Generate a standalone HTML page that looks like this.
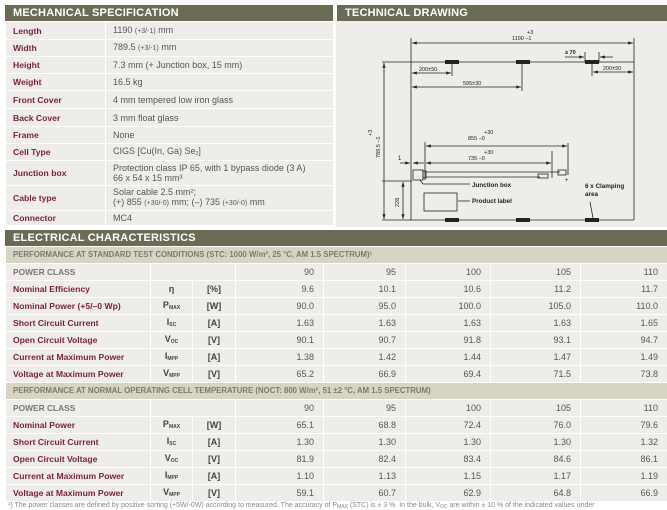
<!DOCTYPE html>
<html><head><meta charset="utf-8"><style>
*{margin:0;padding:0;box-sizing:border-box}
body{width:667px;height:509px;background:#fff;font-family:"Liberation Sans",sans-serif;position:relative;overflow:hidden}
.hd{position:absolute;background:#6b6a55;color:#fff;font-weight:bold;font-size:11px;letter-spacing:0.2px;line-height:16px;padding-left:8px;transform-origin:left}
table{position:absolute;border-collapse:collapse;table-layout:fixed}
td{background:#efede9;border:1px solid #fff;font-size:9px;color:#555;padding:0 7px;white-space:nowrap;line-height:10px;overflow:hidden}
td.l{color:#7a1f3d;font-weight:bold;font-size:8.6px}
td.r{text-align:right;padding-right:9px}
td.c{text-align:center;font-weight:bold;color:#444}
tr.sub td{background:#d7d4c3;color:#7d7a68;font-weight:bold;font-size:7.8px}
tr.pc td{color:#777;font-weight:bold;font-size:8.4px}
tr.pc td.r{font-weight:normal;color:#555;font-size:9px}
sub{font-size:5px;vertical-align:-1px}
small{font-size:7px}
svg text{font-family:"Liberation Sans",sans-serif;fill:#222}
</style></head><body>
<div class="hd" style="left:5px;top:5px;width:328px;height:16px">MECHANICAL SPECIFICATION</div>
<div class="hd" style="left:337px;top:5px;width:330px;height:16px">TECHNICAL DRAWING</div>
<table style="left:5px;top:21px;width:329px">
<col style="width:100px"><col>
<tr style="height:18px"><td class="l">Length</td><td>1190 <small>(+3/-1)</small> mm</td></tr>
<tr style="height:17px"><td class="l">Width</td><td>789.5 <small>(+3/-1)</small> mm</td></tr>
<tr style="height:17px"><td class="l">Height</td><td>7.3 mm (+ Junction box, 15 mm)</td></tr>
<tr style="height:17px"><td class="l">Weight</td><td>16.5 kg</td></tr>
<tr style="height:18px"><td class="l">Front Cover</td><td>4 mm tempered low iron glass</td></tr>
<tr style="height:18px"><td class="l">Back Cover</td><td>3 mm float glass</td></tr>
<tr style="height:17px"><td class="l">Frame</td><td>None</td></tr>
<tr style="height:17px"><td class="l">Cell Type</td><td>CIGS [Cu(In, Ga) Se<sub>2</sub>]</td></tr>
<tr style="height:25px"><td class="l">Junction box</td><td>Protection class IP 65, with 1 bypass diode (3 A)<br>66 x 54 x 15 mm³</td></tr>
<tr style="height:25px"><td class="l">Cable type</td><td>Solar cable 2.5 mm²;<br>(+) 855 <small>(+30/-0)</small> mm; (–) 735 <small>(+30/-0)</small> mm</td></tr>
<tr style="height:15px"><td class="l">Connector</td><td>MC4</td></tr>
</table>
<div style="position:absolute;left:336px;top:21px;width:331px;height:206px;background:#efede9"></div>
<svg style="position:absolute;left:0;top:0" width="667" height="230" viewBox="0 0 667 230" stroke="#222" stroke-width="0.8" fill="none">
<defs><marker id="a" markerWidth="6" markerHeight="4" refX="6" refY="2" orient="auto-start-reverse"><path d="M0,0L6,2L0,4z" fill="#222" stroke="none"/></marker></defs>
<line x1="382" y1="62" x2="634" y2="62"/><line x1="382" y1="220" x2="634" y2="220"/>
<line x1="411" y1="38" x2="411" y2="220"/><line x1="634" y1="38" x2="634" y2="220"/>
<line x1="412" y1="43" x2="633" y2="43" marker-start="url(#a)" marker-end="url(#a)"/>
<g fill="#222" stroke="none">
<rect x="445" y="60" width="14" height="4"/><rect x="516" y="60" width="14" height="4"/><rect x="585" y="60" width="14" height="4"/>
<rect x="445" y="218" width="14" height="4"/><rect x="516" y="218" width="14" height="4"/><rect x="585" y="218" width="14" height="4"/>
</g>
<line x1="452" y1="64" x2="452" y2="76"/><line x1="412" y1="73" x2="451" y2="73" marker-start="url(#a)" marker-end="url(#a)"/>
<line x1="522" y1="64" x2="522" y2="91"/><line x1="412" y1="87" x2="521" y2="87" marker-start="url(#a)" marker-end="url(#a)"/>
<line x1="592" y1="64" x2="592" y2="76"/><line x1="593" y1="72" x2="633" y2="72" marker-start="url(#a)" marker-end="url(#a)"/>
<line x1="585" y1="52" x2="585" y2="62"/><line x1="599" y1="52" x2="599" y2="62"/>
<line x1="565" y1="57" x2="584" y2="57" marker-end="url(#a)"/><line x1="613" y1="57" x2="600" y2="57" marker-end="url(#a)"/>
<line x1="384" y1="63" x2="384" y2="219" marker-start="url(#a)" marker-end="url(#a)"/>
<line x1="425" y1="142" x2="425" y2="180"/><line x1="568" y1="143" x2="568" y2="175"/><line x1="552" y1="151" x2="552" y2="178"/>
<line x1="426" y1="146" x2="567" y2="146" marker-start="url(#a)" marker-end="url(#a)"/>
<line x1="426" y1="163" x2="551" y2="163" marker-start="url(#a)" marker-end="url(#a)"/>
<line x1="400" y1="163" x2="410" y2="163" marker-end="url(#a)"/><line x1="424" y1="163" x2="413" y2="163" marker-end="url(#a)"/>
<rect x="413" y="170" width="10" height="10"/><rect x="423" y="171" width="3" height="7"/>
<line x1="426" y1="172" x2="560" y2="172"/><line x1="426" y1="177" x2="540" y2="177"/>
<rect x="538" y="174" width="10" height="4"/><rect x="558" y="170" width="8" height="5"/>
<line x1="420" y1="180" x2="423" y2="184"/><line x1="423" y1="184" x2="470" y2="184"/>
<line x1="382" y1="181" x2="412" y2="181"/><line x1="403" y1="182" x2="403" y2="219" marker-start="url(#a)" marker-end="url(#a)"/>
<rect x="424" y="193" width="33" height="18"/><line x1="458" y1="201" x2="470" y2="201"/>
<line x1="590" y1="202" x2="593" y2="218"/>
<g stroke="none" font-size="5.5">
<text x="512" y="40">1190 –1</text><text x="527" y="34">+3</text>
<text x="419" y="71">200±50</text><text x="463" y="85">595±30</text><text x="603" y="70">200±50</text>
<text x="565" y="54" font-weight="bold">≥ 70</text>
<text x="468" y="140">855  –0</text><text x="484" y="134">+30</text>
<text x="468" y="160">735  –0</text><text x="484" y="154">+30</text>
<text x="398" y="160" font-size="6">1</text><text x="565" y="182" font-size="6">+</text>
<text transform="translate(380,158) rotate(-90)">789.5 –1</text>
<text transform="translate(372,136) rotate(-90)">+3</text>
<text transform="translate(399,207) rotate(-90)">228</text>
<g font-size="6.3" font-weight="bold"><text x="472" y="187">Junction box</text><text x="472" y="203">Product label</text>
<text x="585" y="188">6 x Clamping</text><text x="585" y="196">area</text></g>
</g>
</svg>
<div class="hd" style="left:5px;top:230px;width:662px;height:16px">ELECTRICAL CHARACTERISTICS</div>
<table style="left:5px;top:246px;width:663px">
<col style="width:145px"><col style="width:42px"><col style="width:43px"><col style="width:88px"><col style="width:82px"><col style="width:85px"><col style="width:90px"><col>
<tr class="sub" style="height:17px"><td colspan="8">PERFORMANCE AT STANDARD TEST CONDITIONS (STC: 1000 W/m², 25 °C, AM 1.5 SPECTRUM)¹</td></tr>
<tr class="pc" style="height:17px"><td>POWER CLASS</td><td colspan="2"></td><td class="r">90</td><td class="r">95</td><td class="r">100</td><td class="r">105</td><td class="r">110</td></tr>
<tr style="height:17px"><td class="l">Nominal Efficiency</td><td class="c">η</td><td class="c">[%]</td><td class="r">9.6</td><td class="r">10.1</td><td class="r">10.6</td><td class="r">11.2</td><td class="r">11.7</td></tr>
<tr style="height:17px"><td class="l">Nominal Power (+5/–0 Wp)</td><td class="c">P<sub>MAX</sub></td><td class="c">[W]</td><td class="r">90.0</td><td class="r">95.0</td><td class="r">100.0</td><td class="r">105.0</td><td class="r">110.0</td></tr>
<tr style="height:17px"><td class="l">Short Circuit Current</td><td class="c">I<sub>SC</sub></td><td class="c">[A]</td><td class="r">1.63</td><td class="r">1.63</td><td class="r">1.63</td><td class="r">1.63</td><td class="r">1.65</td></tr>
<tr style="height:17px"><td class="l">Open Circuit Voltage</td><td class="c">V<sub>OC</sub></td><td class="c">[V]</td><td class="r">90.1</td><td class="r">90.7</td><td class="r">91.8</td><td class="r">93.1</td><td class="r">94.7</td></tr>
<tr style="height:17px"><td class="l">Current at Maximum Power</td><td class="c">I<sub>MPP</sub></td><td class="c">[A]</td><td class="r">1.38</td><td class="r">1.42</td><td class="r">1.44</td><td class="r">1.47</td><td class="r">1.49</td></tr>
<tr style="height:17px"><td class="l">Voltage at Maximum Power</td><td class="c">V<sub>MPP</sub></td><td class="c">[V]</td><td class="r">65.2</td><td class="r">66.9</td><td class="r">69.4</td><td class="r">71.5</td><td class="r">73.8</td></tr>
<tr class="sub" style="height:17px"><td colspan="8">PERFORMANCE AT NORMAL OPERATING CELL TEMPERATURE (NOCT: 800 W/m², 51 ±2 °C, AM 1.5 SPECTRUM)</td></tr>
<tr class="pc" style="height:17px"><td>POWER CLASS</td><td colspan="2"></td><td class="r">90</td><td class="r">95</td><td class="r">100</td><td class="r">105</td><td class="r">110</td></tr>
<tr style="height:17px"><td class="l">Nominal Power</td><td class="c">P<sub>MAX</sub></td><td class="c">[W]</td><td class="r">65.1</td><td class="r">68.8</td><td class="r">72.4</td><td class="r">76.0</td><td class="r">79.6</td></tr>
<tr style="height:17px"><td class="l">Short Circuit Current</td><td class="c">I<sub>SC</sub></td><td class="c">[A]</td><td class="r">1.30</td><td class="r">1.30</td><td class="r">1.30</td><td class="r">1.30</td><td class="r">1.32</td></tr>
<tr style="height:17px"><td class="l">Open Circuit Voltage</td><td class="c">V<sub>OC</sub></td><td class="c">[V]</td><td class="r">81.9</td><td class="r">82.4</td><td class="r">83.4</td><td class="r">84.6</td><td class="r">86.1</td></tr>
<tr style="height:17px"><td class="l">Current at Maximum Power</td><td class="c">I<sub>MPP</sub></td><td class="c">[A]</td><td class="r">1.10</td><td class="r">1.13</td><td class="r">1.15</td><td class="r">1.17</td><td class="r">1.19</td></tr>
<tr style="height:17px"><td class="l">Voltage at Maximum Power</td><td class="c">V<sub>MPP</sub></td><td class="c">[V]</td><td class="r">59.1</td><td class="r">60.7</td><td class="r">62.9</td><td class="r">64.8</td><td class="r">66.9</td></tr>
</table>
<div style="position:absolute;left:8px;top:502px;font-size:7px;color:#888;white-space:nowrap">¹) The power classes are defined by positive sorting (+5W/-0W) according to measured. The accuracy of P<sub>MAX</sub> (STC) is ± 3 %. In the bulk, V<sub>OC</sub> are within ± 10 % of the indicated values under</div>
</body></html>
